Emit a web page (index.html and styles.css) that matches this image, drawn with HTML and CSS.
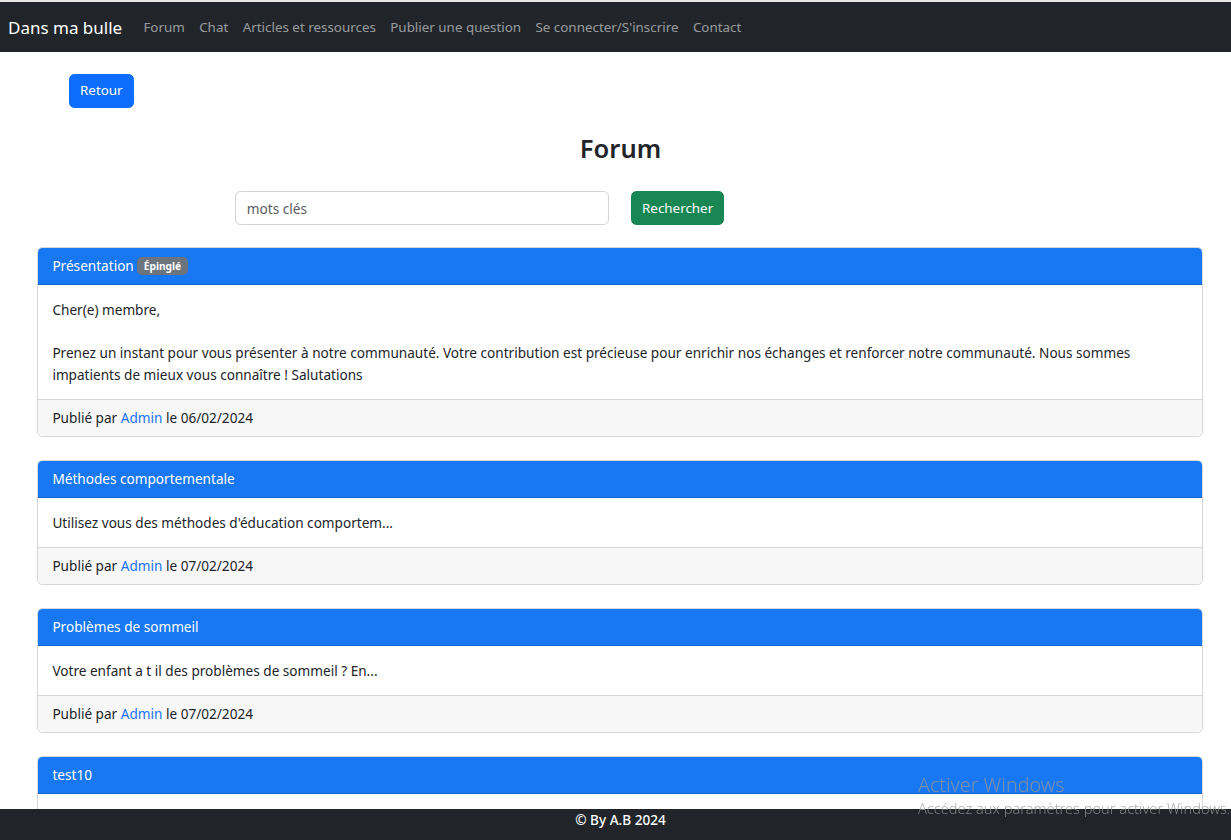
FILE: index.html
```html
<!DOCTYPE html>
<html lang="fr">
<head>
<meta charset="utf-8">
<title>Forum - Dans ma bulle</title>
<link rel="stylesheet" href="styles.css">
</head>
<body>
<nav class="navbar">
  <a class="brand" href="#">Dans ma bulle</a>
  <ul class="nav">
    <li><a class="nav-link" href="#">Forum</a></li>
    <li><a class="nav-link" href="#">Chat</a></li>
    <li><a class="nav-link" href="#">Articles et ressources</a></li>
    <li><a class="nav-link" href="#">Publier une question</a></li>
    <li><a class="nav-link" href="#">Se connecter/S'inscrire</a></li>
    <li><a class="nav-link" href="#">Contact</a></li>
  </ul>
</nav>

<main class="main">
  <div class="back-row"><a class="btn btn-primary" href="#">Retour</a></div>
  <h2 class="title">Forum</h2>
  <form class="search">
    <input class="search-input" type="text" value="mots clés">
    <button class="btn btn-success" type="button">Rechercher</button>
  </form>

  <div class="cards">
    <article class="card">
      <header class="card-header">Présentation <span class="badge">Épinglé</span></header>
      <div class="card-body">
        <p>Cher(e) membre,</p>
        <p>&nbsp;</p>
        <p>Prenez un instant pour vous présenter à notre communauté. Votre contribution est précieuse pour enrichir nos échanges et renforcer notre communauté. Nous sommes impatients de mieux vous connaître ! Salutations</p>
      </div>
      <footer class="card-footer">Publié par <a href="#">Admin</a> le 06/02/2024</footer>
    </article>

    <article class="card">
      <header class="card-header">Méthodes comportementale</header>
      <div class="card-body"><p>Utilisez vous des méthodes d'éducation comportem...</p></div>
      <footer class="card-footer">Publié par <a href="#">Admin</a> le 07/02/2024</footer>
    </article>

    <article class="card">
      <header class="card-header">Problèmes de sommeil</header>
      <div class="card-body"><p>Votre enfant a t il des problèmes de sommeil ? En...</p></div>
      <footer class="card-footer">Publié par <a href="#">Admin</a> le 07/02/2024</footer>
    </article>

    <article class="card">
      <header class="card-header">test10</header>
      <div class="card-body card-body-empty"></div>
    </article>
  </div>
</main>

<footer class="site-footer">© By A.B 2024</footer>

<div class="watermark">
  <div class="wm-title">Activer Windows</div>
  <div class="wm-sub">Accédez aux paramètres pour activer Windows.</div>
</div>
</body>
</html>
```

FILE: styles.css
```css
* { box-sizing: border-box; }

html, body { margin: 0; padding: 0; }

body {
  font-family: "Noto Sans", "Open Sans", "Liberation Sans", sans-serif;
  font-size: 13.6px;
  line-height: 21.6px;
  color: #212529;
  background: #fff;
  border-top: 2px solid #e6e6e6;
  overflow-x: hidden;
}

a { text-decoration: none; }

/* Navbar */
.navbar {
  height: 50px;
  background: #212529;
  display: flex;
  align-items: center;
  padding: 0 8px;
}
.brand {
  color: #fff;
  font-size: 17px;
  line-height: 27px;
  margin-right: 14px;
}
.nav {
  list-style: none;
  margin: 0;
  padding: 0;
  display: flex;
}
.nav-link {
  display: block;
  padding: 1px 7.2px 0;
  font-size: 13.4px;
  color: rgba(255, 255, 255, 0.55);
}

/* Main */
.main {
  padding-top: 22px;
  padding-bottom: 80px;
}
.back-row {
  padding-left: 69px;
  display: flex;
}
.btn {
  display: inline-flex;
  align-items: center;
  justify-content: center;
  height: 34px;
  padding: 0 10px;
  border: 1px solid transparent;
  border-radius: 5.4px;
  font-family: inherit;
  font-size: 13.4px;
  color: #fff;
  cursor: pointer;
}
.btn-primary { background: #0d6efd; border-color: #0d6efd; }
.btn-success { background: #198754; border-color: #198754; }

.title {
  margin: 23px 0 0;
  padding-left: 10px;
  text-align: center;
  font-size: 25.5px;
  line-height: 34px;
  font-weight: 600;
  color: #212529;
}

.search {
  display: flex;
  gap: 22px;
  margin: 26px 0 0;
  padding-left: 235px;
}
.search-input {
  width: 374px;
  height: 34px;
  border: 1px solid #ced4da;
  border-radius: 5.4px;
  padding: 0 10.8px;
  font-family: inherit;
  font-size: 13.6px;
  color: #595c5f;
  background: #fff;
}

/* Cards */
.cards {
  margin: 22px 28px 0 37px;
  display: flex;
  flex-direction: column;
  gap: 23px;
}
.card {
  border: 1px solid #d6d7d8;
  border-radius: 5.4px;
  overflow: hidden;
}
.card-header {
  background: #1877f2;
  color: #fff;
  padding: 7.2px 14.4px;
  border-bottom: 1px solid #1466cf;
}
.badge {
  display: inline-block;
  background: #6c757d;
  color: #fff;
  font-size: 10.2px;
  font-weight: 700;
  line-height: 12px;
  padding: 3px 6.5px;
  border-radius: 5px;
  vertical-align: 1px;
}
.card-body {
  padding: 13.8px 14.4px;
}
.card-body p { margin: 0; }
.card-body-empty { height: 60px; }
.card-footer {
  background: #f7f7f7;
  border-top: 1px solid #d6d7d8;
  padding: 7.2px 14.4px;
}
.card-footer a { color: #1a73f5; }

/* Footer */
.site-footer {
  position: fixed;
  left: 0;
  right: 0;
  bottom: 0;
  height: 31px;
  background: #212529;
  color: #fff;
  font-size: 13.6px;
  font-weight: 500;
  line-height: 22px;
  text-align: center;
  padding-left: 10px;
}

/* OS watermark overlay */
.watermark {
  position: fixed;
  left: 918px;
  top: 772px;
  color: rgba(150, 150, 150, 0.8);
  white-space: nowrap;
  pointer-events: none;
}
.wm-title { font-size: 19.7px; line-height: 26px; font-weight: 300; }
.wm-sub { font-size: 14.6px; line-height: 20px; font-weight: 300; }
```
